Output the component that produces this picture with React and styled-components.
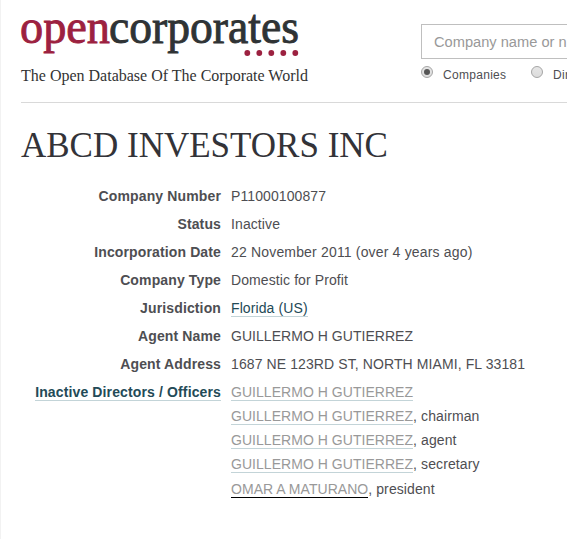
import React from 'react';
import styled, { createGlobalStyle } from 'styled-components';

const GlobalStyle = createGlobalStyle`
    body {
        margin: 0;
        background: #fff;
        overflow: hidden;
    }
    * {
        box-sizing: border-box;
    }
`

const Page = styled.div`
    height: 539px;
    padding-left: 20px;
    border-left: 1px solid #f2f2f2;
    overflow: hidden;
    color: #4e4e52;
    font-family: "Liberation Sans", Arial, sans-serif;
    font-size: 14px;
`

const Header = styled.header`
    display: flex;
    height: 103px;
    border-bottom: 1px solid #d9d9d9;
`

const Brand = styled.div`
    flex: 0 0 400px;
    padding-top: 10px;
`

const LogoSvg = styled.svg`
    display: block;
    overflow: visible;
    font-family: "Liberation Serif", serif;
    font-size: 48px;
`

const Tagline = styled.div`
    margin-top: 9px;
    color: #333;
    font-family: "Liberation Serif", serif;
    font-size: 16px;
    line-height: 18px;
    white-space: nowrap;
`

const Search = styled.form`
    flex: 0 0 260px;
    padding-top: 24px;
`

const SearchInput = styled.input`
    display: block;
    width: 260px;
    height: 35px;
    padding: 1px 12px 0;
    border: 1px solid #bfbfbf;
    outline: none;
    font-family: "Liberation Sans", Arial, sans-serif;
    font-size: 14.65px;
    &::placeholder {
        color: #999;
        opacity: 1;
    }
`

const Options = styled.div`
    display: flex;
    padding-top: 7px;
`

const Option = styled.label`
    display: flex;
    flex: 0 0 110px;
    font-size: 12px;
    line-height: 19px;
    letter-spacing: 0.3px;
    white-space: nowrap;
    span {
        margin-left: 10px;
    }
`

const Radio = styled.i`
    display: flex;
    align-items: center;
    justify-content: center;
    width: 12px;
    height: 12px;
    border: 1px solid #a5a5a5;
    border-radius: 50%;
    background: linear-gradient(#e6e6e6, #dcdcdc);
    &:before {
        content: '';
        width: 6px;
        height: 6px;
        border-radius: 50%;
        background: ${props => props.$checked ? '#555' : 'transparent'};
    }
`

const Title = styled.h1`
    margin: 22px 0 0;
    color: #333338;
    font-family: "Liberation Serif", serif;
    font-size: 35px;
    font-weight: normal;
    line-height: 42px;
    white-space: nowrap;
`

const Details = styled.dl`
    display: grid;
    grid-template-columns: 200px 1fr;
    column-gap: 10px;
    row-gap: 10px;
    margin: 20px 0 0;
    line-height: 18px;
    white-space: nowrap;
`

const Label = styled.dt`
    text-align: right;
    font-weight: bold;
    letter-spacing: 0.13px;
`

const Value = styled.dd`
    margin: 0;
    letter-spacing: ${props => props.$spacing || '0.1px'};
`

const Link = styled.a`
    display: inline-block;
    height: 18px;
    border-bottom: 1px solid ${props => props.$active ? '#000' : '#c3d4d8'};
    color: ${props => props.$muted ? '#999' : '#234a57'};
    vertical-align: top;
`

const Officers = styled.ul`
    margin: 0;
    padding: 0;
    list-style: none;
    li {
        height: 24px;
    }
    li:last-child {
        padding-top: 1px;
    }
    ${Link} {
        letter-spacing: 0.04px;
    }
`

const dots = [247.3, 259.3, 271.3, 283.3, 295.3];

const officers = [
    { name: 'GUILLERMO H GUTIERREZ' },
    { name: 'GUILLERMO H GUTIERREZ', role: 'chairman' },
    { name: 'GUILLERMO H GUTIERREZ', role: 'agent' },
    { name: 'GUILLERMO H GUTIERREZ', role: 'secretary' },
    { name: 'OMAR A MATURANO', role: 'president', active: true },
];

const Logo = () => (
    <LogoSvg width="280" height="48" viewBox="21 10 280 48">
        <text x="20" y="43.3" textLength="90" lengthAdjust="spacingAndGlyphs"
            fill="#9c2140" stroke="#9c2140" strokeWidth="0.9">open</text>
        <text x="109" y="43.3" textLength="190" lengthAdjust="spacingAndGlyphs"
            fill="#2f3335" stroke="#2f3335" strokeWidth="0.9">corporates</text>
        {dots.map(x => <circle key={x} cx={x} cy="53" r="2.9" fill="#9c2140" />)}
    </LogoSvg>
);

const Field = ({label, spacing, children}) => (
    <>
        <Label>{label}</Label>
        <Value $spacing={spacing}>{children}</Value>
    </>
);

const App = () => {
    return (
        <Page>
            <GlobalStyle />
            <Header>
                <Brand>
                    <Logo />
                    <Tagline>The Open Database Of The Corporate World</Tagline>
                </Brand>
                <Search>
                    <SearchInput placeholder="Company name or number" />
                    <Options>
                        <Option><Radio $checked /><span>Companies</span></Option>
                        <Option><Radio /><span>Directors</span></Option>
                    </Options>
                </Search>
            </Header>
            <Title>ABCD INVESTORS INC</Title>
            <Details>
                <Field label="Company Number">P11000100877</Field>
                <Field label="Status">Inactive</Field>
                <Field label="Incorporation Date" spacing="0.17px">22 November 2011 (over 4 years ago)</Field>
                <Field label="Company Type">Domestic for Profit</Field>
                <Field label="Jurisdiction"><Link>Florida (US)</Link></Field>
                <Field label="Agent Name" spacing="0.04px">GUILLERMO H GUTIERREZ</Field>
                <Field label="Agent Address">1687 NE 123RD ST, NORTH MIAMI, FL 33181</Field>
                <Field label={<Link>Inactive Directors / Officers</Link>}>
                    <Officers>
                        {officers.map((o, i) => (
                            <li key={i}>
                                <Link $muted $active={o.active}>{o.name}</Link>{o.role && `, ${o.role}`}
                            </li>
                        ))}
                    </Officers>
                </Field>
            </Details>
        </Page>
    );
};

export default App;
